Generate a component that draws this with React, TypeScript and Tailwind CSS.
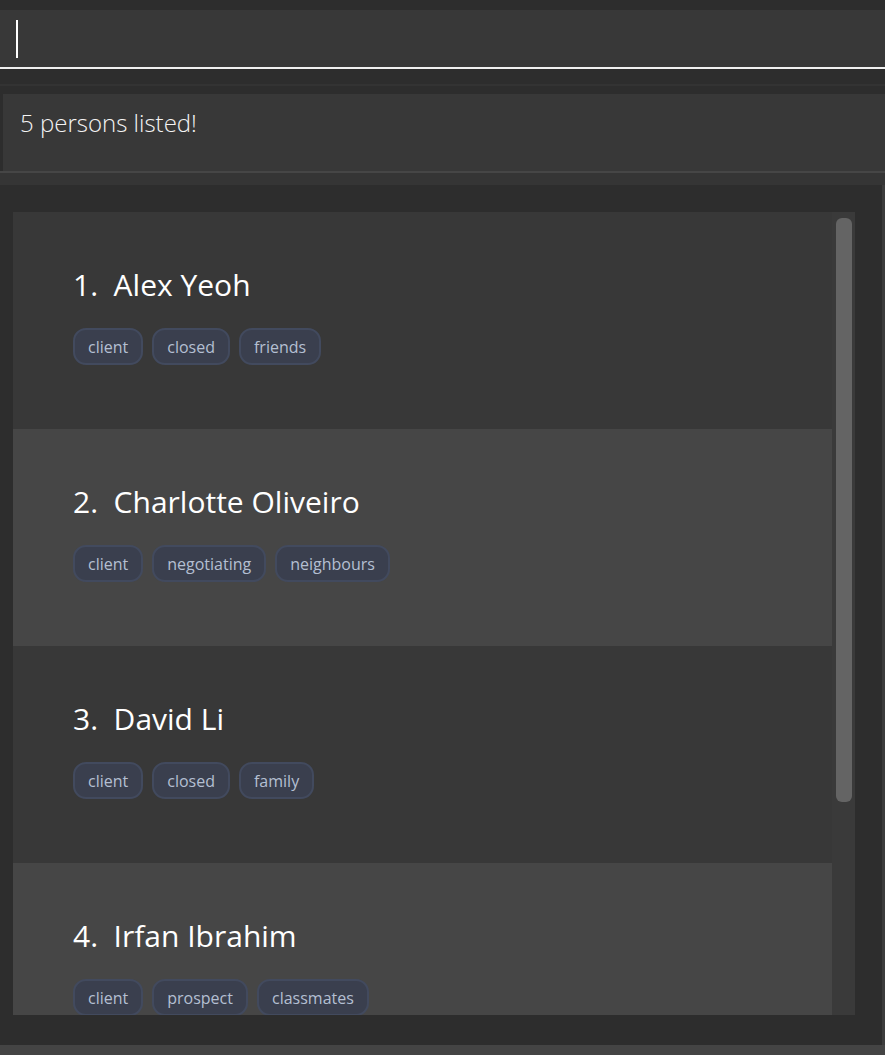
const persons = [
  { name: "Alex Yeoh", tags: ["client", "closed", "friends"] },
  { name: "Charlotte Oliveiro", tags: ["client", "negotiating", "neighbours"] },
  { name: "David Li", tags: ["client", "closed", "family"] },
  { name: "Irfan Ibrahim", tags: ["client", "prospect", "classmates"] },
];

const PersonCard = ({ index, name, tags }: { index: number; name: string; tags: string[] }) => {
  const odd = index % 2 === 0;
  return (
    <div className={`h-[217px] shrink-0 pl-[60px] pt-[50px] ${odd ? "bg-[#383838]" : "bg-[#464646]"}`}>
      <p className="text-[30px] leading-[46px] text-white whitespace-pre">
        {`${index + 1}.  ${name}`}
      </p>
      <div className="flex gap-[9px] mt-[20px]">
        {tags.map((tag) => (
          <span
            key={tag}
            className="h-[37px] px-[13px] flex items-center rounded-[13px] bg-[#3a3f4e] border-2 border-[#424a5e] text-[16px] text-[#b4bfd2]"
          >
            {tag}
          </span>
        ))}
      </div>
    </div>
  );
};

export default function App() {
  return (
    <div
      className="w-[885px] h-[1055px] flex flex-col bg-[#2d2d2d] overflow-hidden"
      style={{ fontFamily: '"Open Sans", "Noto Sans", sans-serif' }}
    >
      <div className="h-[10px] shrink-0" />
      {/* command box */}
      <div className="h-[59px] shrink-0 bg-[#383838] border-b-2 border-[#f0f0f0] flex items-center pl-[16px]">
        <div className="w-[2px] h-[38px] bg-white" />
      </div>
      <div className="h-[15px] shrink-0" />
      <div className="h-[2px] shrink-0 bg-[#333333]" />
      <div className="h-[8px] shrink-0" />
      {/* result box */}
      <div className="h-[77px] shrink-0 ml-[3px] bg-[#383838] px-[17px] pt-[11px]">
        <p className="text-[24px] font-light text-[#f4f4f4]">5 persons listed!</p>
      </div>
      <div className="h-[2px] shrink-0 bg-[#464646]" />
      <div className="h-[12px] shrink-0 bg-[#353535]" />
      {/* list panel */}
      <div className="flex-1 min-h-0 flex border-r-[3px] border-[#3c3c3c] pl-[13px] pr-[27px] pt-[27px] pb-[30px]">
        <div className="flex-1 flex min-h-0">
          <div className="flex-1 flex flex-col overflow-hidden">
            {persons.map((p, i) => (
              <PersonCard key={p.name} index={i} name={p.name} tags={p.tags} />
            ))}
          </div>
          <div className="w-[23px] bg-[#3a3a3a] pt-[6px] pl-[4px] pr-[3px]">
            <div className="h-[584px] rounded-[6px] bg-[#646464]" />
          </div>
        </div>
      </div>
      <div className="h-[10px] shrink-0 bg-[#444444]" />
    </div>
  );
}
